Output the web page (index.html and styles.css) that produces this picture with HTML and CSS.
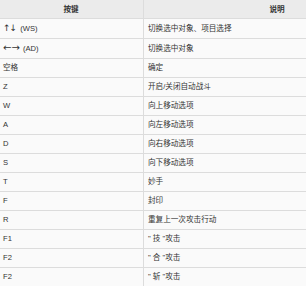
FILE: index.html
```html
<!DOCTYPE html>
<html lang="zh">
<head>
<meta charset="utf-8">
<link rel="stylesheet" href="styles.css">
</head>
<body>
<div class="wrap">
<table class="keys">
<thead>
<tr><th class="c-key">按键</th><th class="c-desc">说明</th></tr>
</thead>
<tbody>
<tr><td><span class="arrows">↑↓</span> (WS)</td><td>切换选中对象、项目选择</td></tr>
<tr><td><span class="arrows wide">←→</span> (AD)</td><td>切换选中对象</td></tr>
<tr><td>空格</td><td>确定</td></tr>
<tr><td>Z</td><td>开启/关闭自动战斗</td></tr>
<tr><td>W</td><td>向上移动选项</td></tr>
<tr><td>A</td><td>向左移动选项</td></tr>
<tr><td>D</td><td>向右移动选项</td></tr>
<tr><td>S</td><td>向下移动选项</td></tr>
<tr><td>T</td><td>妙手</td></tr>
<tr><td>F</td><td>封印</td></tr>
<tr><td>R</td><td>重复上一次攻击行动</td></tr>
<tr><td>F1</td><td>" 技 "攻击</td></tr>
<tr><td>F2</td><td>" 合 "攻击</td></tr>
<tr><td>F2</td><td>" 斩 "攻击</td></tr>
</tbody>
</table>
</div>
</body>
</html>
```
FILE: styles.css
```css
html, body {
  margin: 0;
  padding: 0;
  background: #ffffff;
  overflow: hidden;
}
.wrap {
  width: 306px;
  height: 286px;
  overflow: hidden;
}
.keys {
  border-collapse: collapse;
  table-layout: fixed;
  width: 396px;
  font-family: "Liberation Sans", "Noto Sans CJK SC", sans-serif;
  font-size: 7.6px;
  color: #333333;
}
.c-key { width: 136px; }
.c-desc { width: 260px; }
.keys th,
.keys td {
  height: 18px;
  padding: 0 4px 0 3px;
  border-bottom: 1px solid #dcdcdc;
  border-right: 1px solid #dcdcdc;
  line-height: 18px;
  white-space: nowrap;
  overflow: hidden;
  vertical-align: middle;
}
.keys th {
  background: #ebebeb;
  font-weight: bold;
  text-align: center;
  font-family: "Noto Sans CJK SC", sans-serif;
}
.keys td {
  background: #fafafa;
  text-align: left;
}
.keys td + td {
  padding-left: 4px;
}
.arrows {
  font-family: "DejaVu Sans", sans-serif;
  font-size: 9px;
  letter-spacing: -1px;
  margin-right: 2px;
}
.arrows.wide {
  font-size: 10px;
  letter-spacing: 0;
  margin-right: 1px;
}
```
